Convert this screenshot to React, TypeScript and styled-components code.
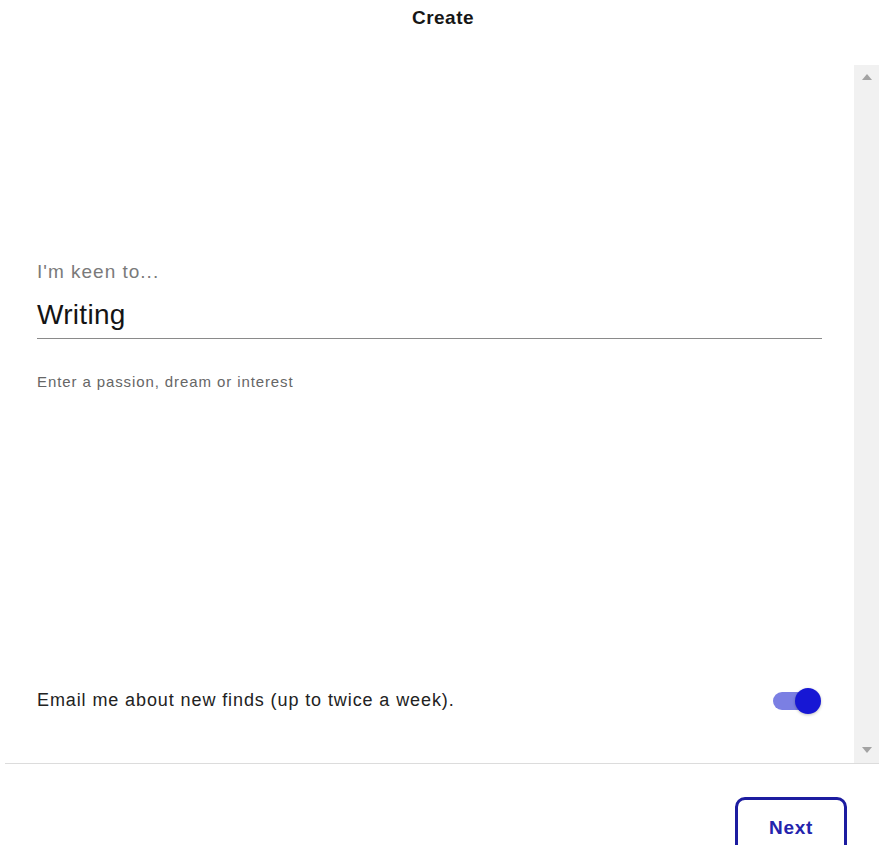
import React from "react";
import styled, { createGlobalStyle } from "styled-components";

const GlobalStyle = createGlobalStyle`
  html, body {
    margin: 0;
    padding: 0;
    background: #fff;
    font-family: "Liberation Sans", Arial, sans-serif;
  }
`;

const Page = styled.div`
  width: 894px;
  height: 845px;
  overflow: hidden;
  display: flex;
  flex-direction: column;
`;

const Header = styled.div`
  height: 36px;
  flex-shrink: 0;
  display: flex;
  align-items: center;
  justify-content: center;
  font-size: 19px;
  font-weight: 700;
  letter-spacing: 0.5px;
  color: #161616;
  padding-right: 8px;
  margin-bottom: 29px;
`;

const ScrollFrame = styled.div`
  flex-shrink: 0;
  margin: 0 15px 0 5px;
  height: 698px;
  display: flex;
  border-bottom: 1px solid #dcdcdc;
`;

const Body = styled.div`
  flex: 1;
  display: flex;
  flex-direction: column;
  padding: 196px 32px 0 32px;
`;

const Label = styled.div`
  font-size: 19px;
  letter-spacing: 1px;
  color: #7a7a7a;
  line-height: 22px;
`;

const Value = styled.div`
  font-size: 28px;
  letter-spacing: 0.3px;
  color: #141414;
  line-height: 34px;
  margin-top: 15px;
  padding-bottom: 6px;
  border-bottom: 1px solid #8a8a8a;
`;

const Hint = styled.div`
  font-size: 15px;
  letter-spacing: 0.9px;
  color: #666;
  margin-top: 34px;
`;

const Spacer = styled.div`
  flex: 1;
`;

const OptRow = styled.div`
  display: flex;
  align-items: center;
  justify-content: space-between;
  margin-bottom: 52px;
`;

const OptText = styled.div`
  font-size: 18px;
  letter-spacing: 0.9px;
  color: #222;
`;

const Toggle = styled.div<{ on: boolean }>`
  position: relative;
  width: 40px;
  height: 18px;
  border-radius: 9px;
  background: ${(p) => (p.on ? "#7b7fe3" : "#bbb")};
  margin-right: 9px;
`;

const Thumb = styled.div<{ on: boolean }>`
  position: absolute;
  top: -4px;
  left: ${(p) => (p.on ? "22px" : "-4px")};
  width: 26px;
  height: 26px;
  border-radius: 50%;
  background: ${(p) => (p.on ? "#1717d4" : "#f5f5f5")};
  box-shadow: 0 1px 3px rgba(0, 0, 0, 0.25);
`;

const ScrollBar = styled.div`
  width: 25px;
  background: #f1f1f1;
  display: flex;
  flex-direction: column;
  justify-content: space-between;
  align-items: center;
  padding: 9px 0 10px;
`;

const Arrow = styled.div<{ down?: boolean }>`
  width: 0;
  height: 0;
  border-left: 5px solid transparent;
  border-right: 5px solid transparent;
  ${(p) =>
    p.down
      ? "border-top: 6px solid #a3a3a3;"
      : "border-bottom: 6px solid #a3a3a3;"}
`;

const Footer = styled.div`
  flex-shrink: 0;
  display: flex;
  justify-content: flex-end;
  padding: 33px 47px 0 0;
`;

const NextButton = styled.button`
  width: 112px;
  height: 64px;
  border: 3px solid #1c1ca0;
  border-radius: 10px;
  background: #fff;
  color: #2424ad;
  font-family: "Liberation Sans", Arial, sans-serif;
  font-size: 19px;
  font-weight: 700;
  letter-spacing: 0.7px;
  padding: 0 0 2px 0;
`;

export default function App() {
  return (
    <Page>
      <GlobalStyle />
      <Header>Create</Header>
      <ScrollFrame>
        <Body>
          <Label>I'm keen to...</Label>
          <Value>Writing</Value>
          <Hint>Enter a passion, dream or interest</Hint>
          <Spacer />
          <OptRow>
            <OptText>Email me about new finds (up to twice a week).</OptText>
            <Toggle on={true}>
              <Thumb on={true} />
            </Toggle>
          </OptRow>
        </Body>
        <ScrollBar>
          <Arrow />
          <Arrow down />
        </ScrollBar>
      </ScrollFrame>
      <Footer>
        <NextButton>Next</NextButton>
      </Footer>
    </Page>
  );
}
